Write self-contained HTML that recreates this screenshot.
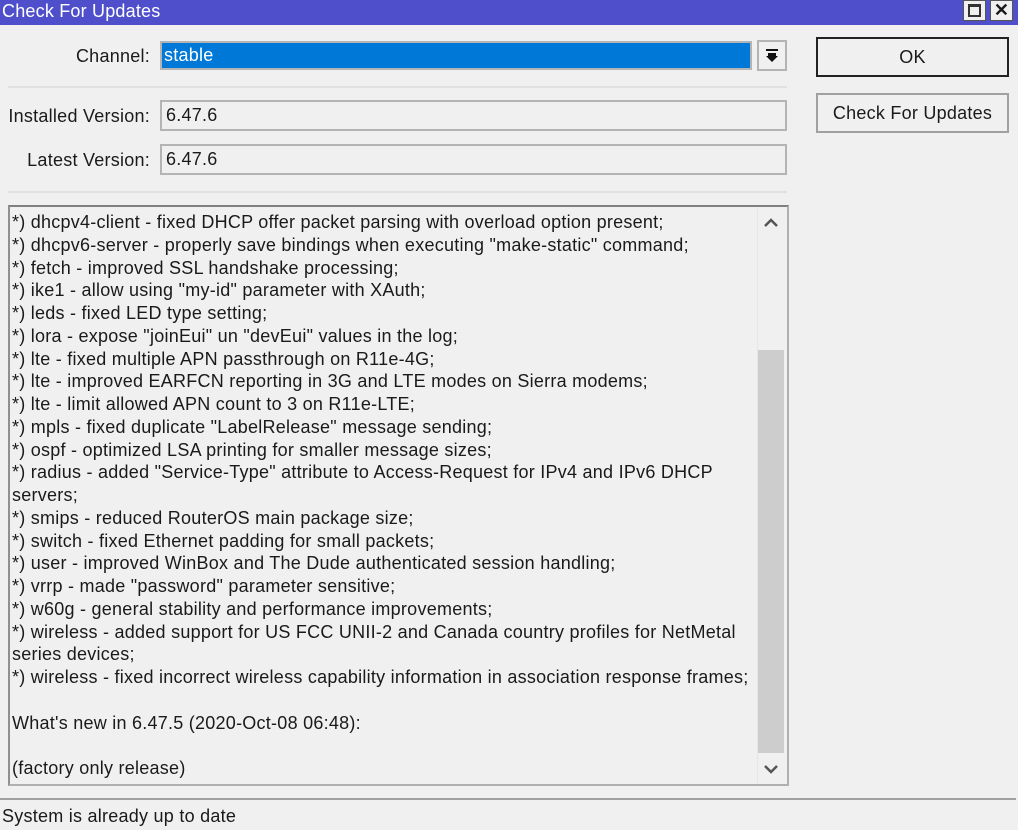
<!DOCTYPE html>
<html><head><meta charset="utf-8"><style>
*{margin:0;padding:0;box-sizing:border-box}
body{width:1018px;height:830px;background:#f0f0f0;font-family:"Liberation Sans",sans-serif;font-size:18px;letter-spacing:0.25px;color:#1a1a1a;position:relative;overflow:hidden}
.abs{position:absolute}
.title{left:0;top:0;width:1018px;height:25px;background:#4f4fcc;color:#fff;font-size:18px;letter-spacing:0.2px;line-height:23px;padding-left:2px}
.wb{top:0;width:23px;height:21px;background:#f0f0f0;border:1px solid #555}
.lbl{text-align:right;line-height:28px}
.inp{border:2px solid #b4b4b4;background:#f0f0f0;padding-left:4px;line-height:27px}
.sep{height:2px;background:#e0e0e0;left:8px;width:779px}
.btn{left:816px;width:193px;height:40px;text-align:center;line-height:37px;background:#f0f0f0;border:2px solid #a0a0a0}
.txt{left:8px;top:205px;width:781px;height:581px;border:2px solid #b0b0b0;border-top-color:#808080;border-left-color:#909090;background:#f0f0f0}
.lines{left:12px;top:211px;width:745px;line-height:22.75px;white-space:pre}
</style></head><body>
<div class="abs title">Check For Updates</div>
<div class="abs wb" style="left:963px"><div style="position:absolute;left:4px;top:3px;width:13px;height:13px;border:2px solid #333;border-top-width:3px"></div></div>
<div class="abs wb" style="left:990px;font-weight:bold;font-size:18px;text-align:center;line-height:18px">✕</div>

<div class="abs lbl" style="left:0;width:150px;top:42px">Channel:</div>
<div class="abs" style="left:160px;top:41px;width:592px;height:29px;border:2px solid #b4b4b4;background:#0078d7;color:#fff;padding-left:2px;line-height:25px">stable</div>
<div class="abs" style="left:757px;top:40px;width:30px;height:31px;border:2px solid #b4b4b4;text-align:center">
<svg width="14" height="16" viewBox="0 0 14 16" style="margin-top:6px"><rect x="1" y="1" width="12" height="2" fill="#111"/><path d="M3 5h8v3h2l-6 6-6-6h2z" fill="#111"/></svg></div>
<div class="abs sep" style="top:86px"></div>
<div class="abs lbl" style="left:0;width:150px;top:102px">Installed Version:</div>
<div class="abs inp" style="left:160px;top:100px;width:627px;height:31px">6.47.6</div>
<div class="abs lbl" style="left:0;width:150px;top:146px">Latest Version:</div>
<div class="abs inp" style="left:160px;top:144px;width:627px;height:31px">6.47.6</div>
<div class="abs sep" style="top:191px"></div>

<div class="abs btn" style="top:37px;border-color:#222">OK</div>
<div class="abs btn" style="top:93px">Check For Updates</div>

<div class="abs txt"></div>
<div class="abs lines">*) dhcpv4-client - fixed DHCP offer packet parsing with overload option present;
*) dhcpv6-server - properly save bindings when executing "make-static" command;
*) fetch - improved SSL handshake processing;
*) ike1 - allow using "my-id" parameter with XAuth;
*) leds - fixed LED type setting;
*) lora - expose "joinEui" un "devEui" values in the log;
*) lte - fixed multiple APN passthrough on R11e-4G;
*) lte - improved EARFCN reporting in 3G and LTE modes on Sierra modems;
*) lte - limit allowed APN count to 3 on R11e-LTE;
*) mpls - fixed duplicate "LabelRelease" message sending;
*) ospf - optimized LSA printing for smaller message sizes;
*) radius - added "Service-Type" attribute to Access-Request for IPv4 and IPv6 DHCP
servers;
*) smips - reduced RouterOS main package size;
*) switch - fixed Ethernet padding for small packets;
*) user - improved WinBox and The Dude authenticated session handling;
*) vrrp - made "password" parameter sensitive;
*) w60g - general stability and performance improvements;
*) wireless - added support for US FCC UNII-2 and Canada country profiles for NetMetal
series devices;
*) wireless - fixed incorrect wireless capability information in association response frames;

What's new in 6.47.5 (2020-Oct-08 06:48):

(factory only release)</div>
<div class="abs" style="left:757px;top:207px;width:30px;height:577px;background:#f0f0f0;border-left:1px solid #e6e6e6"></div>
<div class="abs" style="left:758px;top:350px;width:26px;height:403px;background:#cdcdcd"></div>
<svg class="abs" style="left:764px;top:218px" width="14" height="10"><path d="M1 8l6-6 6 6" stroke="#555" stroke-width="2.5" fill="none"/></svg>
<svg class="abs" style="left:764px;top:764px" width="14" height="10"><path d="M1 2l6 6 6-6" stroke="#555" stroke-width="2.5" fill="none"/></svg>

<div class="abs" style="left:0;top:798px;width:1016px;height:2px;background:#a0a0a0"></div>
<div class="abs" style="left:2px;top:805px;line-height:22px">System is already up to date</div>
</body></html>
